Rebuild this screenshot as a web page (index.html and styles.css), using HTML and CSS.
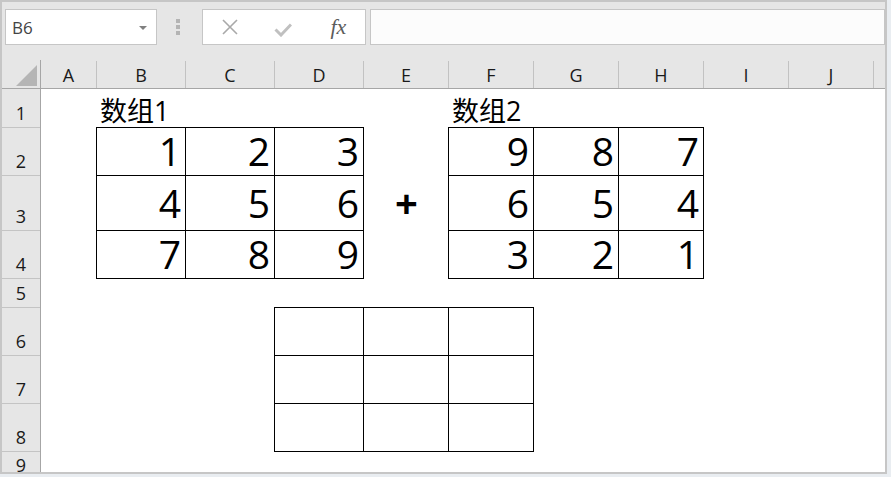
FILE: index.html
```html
<!DOCTYPE html>
<html lang="zh-CN">
<head>
    <meta charset="UTF-8">
    <meta name="viewport" content="width=device-width, initial-scale=1.0">
    <title>数组相加</title>
    <link rel="stylesheet" href="styles.css">
</head>
<body>
    <div class="window">
        <!-- 编辑栏 -->
        <div class="formula-bar">
            <div class="name-box">
                <span>B6</span>
                <i class="caret"></i>
            </div>
            <div class="grip"><i></i><i></i><i></i></div>
            <div class="fx-buttons">
                <span class="fx-btn">
                    <svg width="16" height="16" viewBox="0 0 16 16"><path d="M1 1 L15 15 M15 1 L1 15" stroke="#a9a9a9" stroke-width="1.6" fill="none"/></svg>
                </span>
                <span class="fx-btn">
                    <svg width="18" height="14" viewBox="0 0 18 14"><polyline points="1.5,6.5 7,12 17,1.5" stroke="#c0c0c0" stroke-width="3" fill="none"/></svg>
                </span>
                <span class="fx-btn fx">fx</span>
            </div>
            <div class="formula-input"></div>
        </div>

        <!-- 工作表 -->
        <div class="sheet">
            <div class="col-heads">
                <div class="corner">
                    <svg width="38" height="28" viewBox="0 0 38 28"><polygon points="35,5 35,26 14,26" fill="#b5b5b5"/></svg>
                </div>
                <div>A</div>
                <div>B</div>
                <div>C</div>
                <div>D</div>
                <div>E</div>
                <div>F</div>
                <div>G</div>
                <div>H</div>
                <div>I</div>
                <div>J</div>
                <div class="rest"></div>
            </div>

            <div class="sheet-body">
                <div class="row-heads">
                    <div>1</div>
                    <div>2</div>
                    <div>3</div>
                    <div>4</div>
                    <div>5</div>
                    <div>6</div>
                    <div>7</div>
                    <div>8</div>
                    <div>9</div>
                </div>

                <div class="cells">
                    <div class="label lbl-1">数组1</div>
                    <div class="arr arr-1">
                        <div>1</div><div>2</div><div>3</div>
                        <div>4</div><div>5</div><div>6</div>
                        <div>7</div><div>8</div><div>9</div>
                    </div>

                    <div class="plus">+</div>

                    <div class="label lbl-2">数组2</div>
                    <div class="arr arr-2">
                        <div>9</div><div>8</div><div>7</div>
                        <div>6</div><div>5</div><div>4</div>
                        <div>3</div><div>2</div><div>1</div>
                    </div>

                    <!-- 结果区域 -->
                    <div class="arr arr-3">
                        <div></div><div></div><div></div>
                        <div></div><div></div><div></div>
                        <div></div><div></div><div></div>
                    </div>
                </div>
            </div>
        </div>
    </div>
</body>
</html>
```

FILE: styles.css
```css
body {
    margin: 0;
    background-color: #e9edf1;
    font-family: "Open Sans", "Noto Sans CJK SC", sans-serif;
    color: #000;
}
.window {
    width: 887px;
    height: 474px;
    box-sizing: border-box;
    border: 2px solid #c6c6c6;
    background-color: #e6e6e6;
    display: flex;
    flex-direction: column;
    overflow: hidden;
}

/* 编辑栏 */
.formula-bar {
    height: 58px;
    flex-shrink: 0;
    box-sizing: border-box;
    padding: 7px 0 0 3px;
    display: flex;
    align-items: flex-start;
}
.name-box,
.fx-buttons,
.formula-input {
    height: 36px;
    box-sizing: border-box;
    border: 1px solid #c6c6c6;
    background-color: #fff;
}
.name-box {
    width: 152px;
    display: flex;
    align-items: center;
    justify-content: space-between;
    padding: 0 9px 0 6px;
    font-size: 17px;
    color: #444;
}
.caret {
    width: 0;
    height: 0;
    border-left: 4px solid transparent;
    border-right: 4px solid transparent;
    border-top: 4px solid #808080;
    margin-top: 1px;
}
.grip {
    width: 45px;
    height: 36px;
    padding-right: 3px;
    box-sizing: border-box;
    display: flex;
    flex-direction: column;
    align-items: center;
    justify-content: center;
    gap: 2px;
}
.grip i {
    width: 4px;
    height: 4px;
    background-color: #b4b4b4;
}
.fx-buttons {
    width: 164px;
    display: flex;
    margin-right: 4px;
}
.fx-btn {
    flex: 1;
    display: flex;
    align-items: center;
    justify-content: center;
}
.fx-btn svg {
    display: block;
}
.fx-btn:nth-child(2) {
    padding-top: 5px;
}
.fx {
    font-family: "Liberation Serif", serif;
    font-style: italic;
    font-size: 22px;
    color: #5c5c5c;
    padding-left: 2px;
}
.formula-input {
    flex: 1;
    background-color: #fcfcfc;
}

/* 工作表 */
.sheet {
    flex: 1;
    overflow: hidden;
    display: flex;
    flex-direction: column;
}
.col-heads {
    height: 29px;
    flex-shrink: 0;
    box-sizing: border-box;
    padding-top: 1px;
    border-bottom: 1px solid #a6a6a6;
    display: grid;
    grid-template-columns: 39px 56px 89px 89px 89px 85px 85px 85px 85px 85px 85px 1fr;
}
.col-heads > div {
    border-right: 1px solid #c2c2c2;
    display: flex;
    align-items: center;
    justify-content: center;
    font-size: 18px;
    line-height: 1;
    color: #1a1a1a;
}
.col-heads .corner {
    border-right-color: #a6a6a6;
    margin-top: -1px;
    align-items: flex-start;
}
.col-heads .rest {
    border-right: none;
}
.sheet-body {
    display: flex;
    background-color: #fff;
}
.row-heads {
    width: 39px;
    flex-shrink: 0;
    display: grid;
    grid-template-rows: 39px 48px 55px 48px 29px 48px 48px 48px 28px;
    background-color: #e6e6e6;
    border-right: 1px solid #a6a6a6;
    box-sizing: border-box;
}
.row-heads > div {
    border-bottom: 1px solid #c4c4c4;
    display: flex;
    align-items: flex-end;
    justify-content: center;
    padding-bottom: 5px;
    font-size: 18px;
    line-height: 1;
    color: #1a1a1a;
}
.cells {
    flex: 1;
    display: grid;
    grid-template-columns: 56px 89px 89px 89px 85px 85px 85px 85px 85px 85px 1fr;
    grid-template-rows: 39px 48px 55px 48px 29px 48px 48px 48px 28px;
}
.label {
    align-self: end;
    padding: 0 0 4px 3px;
    font-size: 27px;
    line-height: 1;
    white-space: nowrap;
}
.lbl-1 {
    grid-column: 2;
    grid-row: 1;
}
.lbl-2 {
    grid-column: 6;
    grid-row: 1;
}
.plus {
    grid-column: 5;
    grid-row: 3;
    display: flex;
    align-items: center;
    justify-content: center;
    font-size: 40px;
    font-weight: bold;
    line-height: 1;
    padding-bottom: 2px;
}
.arr {
    display: grid;
    margin: -1px 0 0 -1px;
    border-left: 1px solid #000;
    border-top: 1px solid #000;
}
.arr > div {
    box-sizing: border-box;
    border-right: 1px solid #000;
    border-bottom: 1px solid #000;
    display: flex;
    align-items: center;
    justify-content: flex-end;
    padding: 0 4px 2px 0;
    font-size: 39px;
    line-height: 1;
}
.arr-1 {
    grid-column: 2 / 5;
    grid-row: 2 / 5;
    grid-template-columns: repeat(3, 89px);
    grid-template-rows: 48px 55px 48px;
}
.arr-2 {
    grid-column: 6 / 9;
    grid-row: 2 / 5;
    grid-template-columns: repeat(3, 85px);
    grid-template-rows: 48px 55px 48px;
}
.arr-3 {
    grid-column: 4 / 7;
    grid-row: 6 / 9;
    grid-template-columns: 89px 85px 85px;
    grid-template-rows: 48px 48px 48px;
}
```
